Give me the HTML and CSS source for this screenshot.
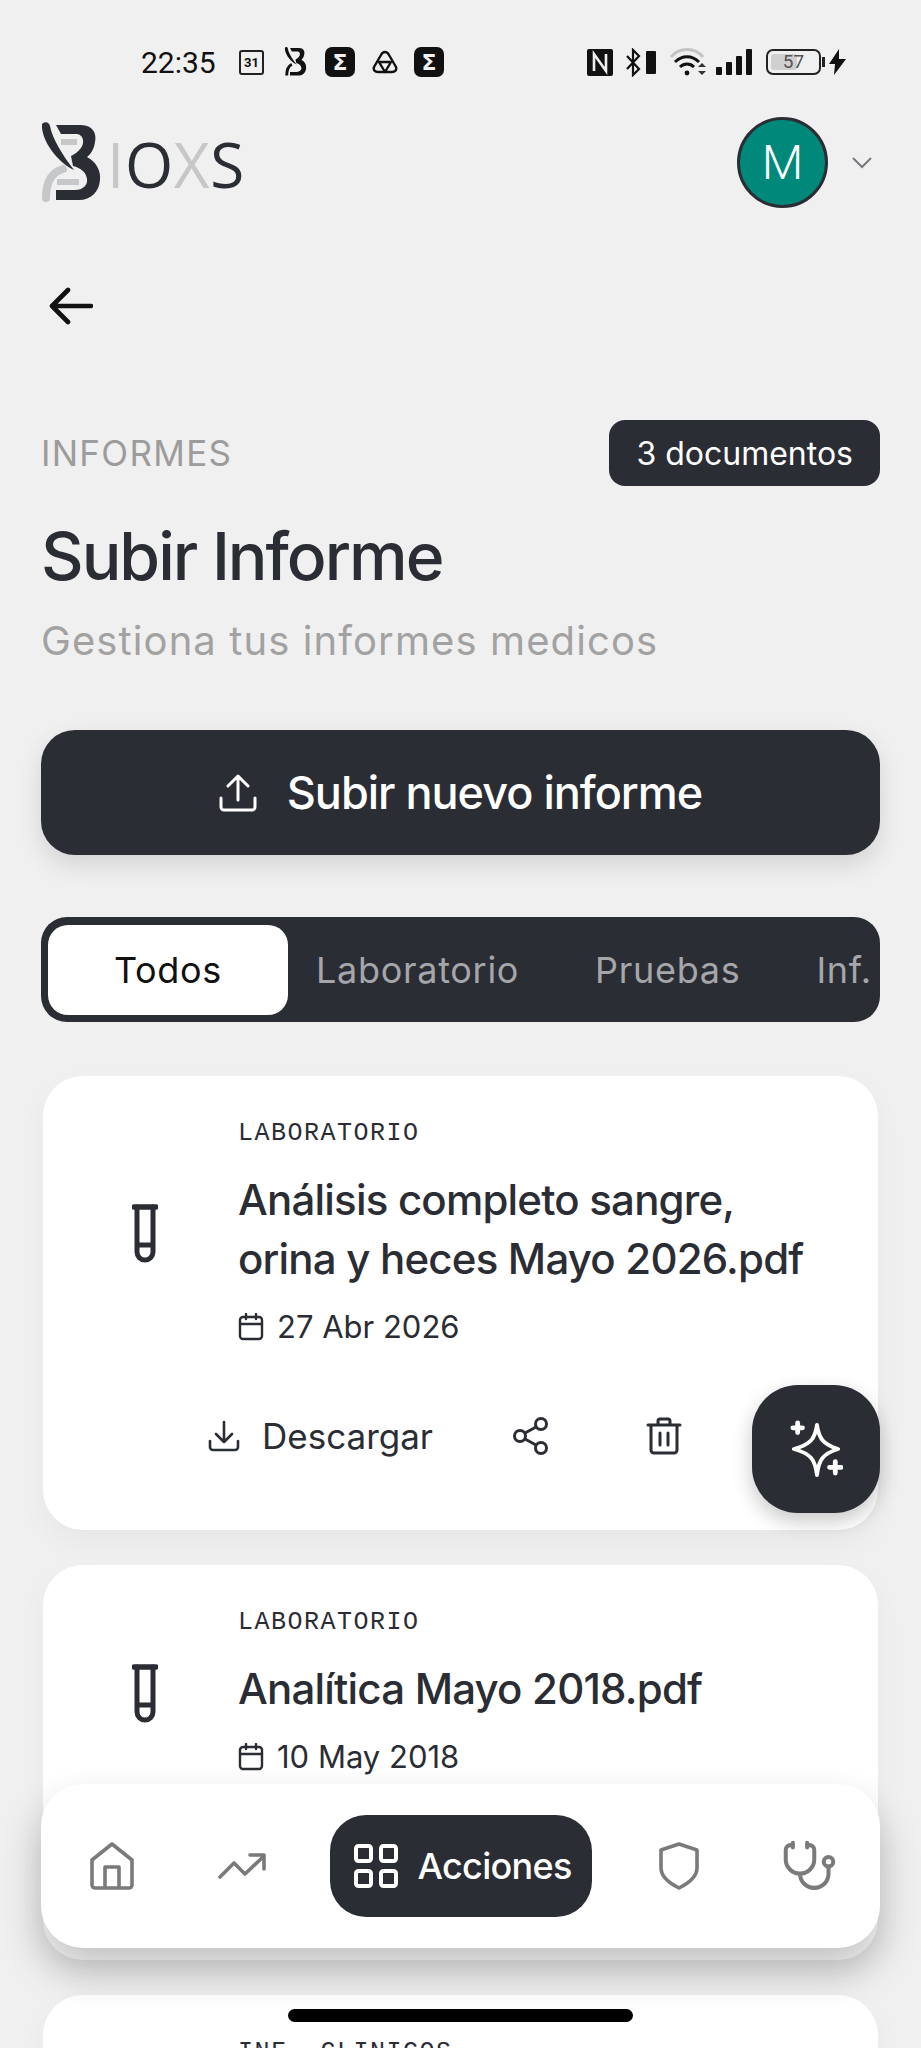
FILE: index.html
```html
<!DOCTYPE html>
<html lang="es">
<head>
    <meta charset="UTF-8">
    <meta name="viewport" content="width=device-width, initial-scale=1.0">
    <title>Subir Informe</title>
    <link rel="stylesheet" href="styles.css">
</head>
<body>
<div class="page">
    <!-- status bar -->
    <div class="status">
        <div class="status-left">
            <span class="time">22:35</span>
            <span class="cal-icon">31</span>
            <svg class="st-b" viewBox="0 0 60 82"><path d="M15 3H40C52 3 56 12 54 20C53 27 50 32 46 35C55 40 60 48 59 58C58 70 50 78 38 78H15V68H34C42 68 47 63 46 57C45 50 40 46 32 44L30 34C38 30 43 24 42 18C41 13 38 12 34 12H20Z"/><path d="M1 2C4 -1 8 0 9 4C11 16 22 34 33 48C20 42 3 24 1 6Z"/><path d="M20 47C10 52 6 62 6 78" fill="none" stroke="#111" stroke-width="8"/></svg>
            <span class="sigma">Σ</span>
            <svg class="st-tri" viewBox="0 0 26 24" fill="none" stroke="#111" stroke-width="2.4" stroke-linejoin="round"><path d="M13 2C15 2 16 3 17 5L24 17C25 20 23 22 20 22H6C3 22 1 20 2 17L9 5C10 3 11 2 13 2Z"/><path d="M7 12H19L13 22Z"/></svg>
            <span class="sigma">Σ</span>
        </div>
        <div class="status-right">
            <svg class="st-nfc" viewBox="0 0 26 27"><rect width="26" height="27" rx="2" fill="#111"/><path d="M7 22V5L19 22V5" fill="none" stroke="#f0f0f0" stroke-width="2.6"/></svg>
            <svg class="st-bt" viewBox="0 0 30 29" fill="none" stroke="#111" stroke-width="2.2"><path d="M1 8 13 21 7 27V2L13 8 1 21"/><rect x="20" y="3" width="10" height="23" rx="1" fill="#111" stroke="none"/></svg>
            <svg class="st-wifi" viewBox="0 0 37 29" fill="none" stroke="#111" stroke-width="3"><path d="M1 9C9 -1 25 -1 33 9" stroke="#c4c4c4"/><path d="M5 14C12 7 22 7 29 14"/><path d="M10 19C14 15 20 15 24 19"/><circle cx="17" cy="25" r="2.4" fill="#111" stroke="none"/><path d="M28 19l4 -4 4 4zM28 23h8l-4 4z" fill="#333" stroke="none"/></svg>
            <svg class="st-signal" viewBox="0 0 36 26"><rect x="0" y="18" width="6" height="8" rx="1"/><rect x="10" y="13" width="6" height="13" rx="1"/><rect x="20" y="7" width="6" height="19" rx="1"/><rect x="30" y="0" width="6" height="26" rx="1"/></svg>
            <div class="battery"><span class="battery-fill"></span><span class="battery-num">57</span></div>
            <svg class="st-bolt" viewBox="0 0 17 26"><path d="M10 0 0 15H6L5 26 17 10H10Z" fill="#111"/></svg>
        </div>
    </div>

    <div class="header">
        <div class="logo">
            <svg class="logo-mark" viewBox="0 0 60 82">
                <path d="M22 47C11 50 5 60 5 76" fill="none" stroke="#c6c7c9" stroke-width="8" stroke-linecap="round"/>
                <path d="M20 20H36M16 60H38" fill="none" stroke="#c6c7c9" stroke-width="6"/>
                <path d="M15 3H40C52 3 56 12 54 20C53 27 50 32 46 35C55 40 60 48 59 58C58 70 50 78 38 78H15V68H34C42 68 47 63 46 57C45 50 40 46 32 44L30 34C38 30 43 24 42 18C41 13 38 12 34 12H20Z" fill="#2b2d35"/>
                <path d="M1 2C4 -1 8 0 9 4C11 16 22 34 33 48C20 42 3 24 1 6Z" fill="#2b2d35"/>
            </svg>
            <span class="logo-word"><span class="logo-light">I</span>O<span class="logo-light">X</span>S</span>
        </div>
        <div class="user">
            <div class="avatar">M</div>
            <svg class="chevron" viewBox="0 0 20 12" fill="none" stroke="#77797f" stroke-width="2"><path d="M1 1 10 10 19 1"/></svg>
        </div>
    </div>

    <svg class="back" viewBox="0 0 44 38" fill="none" stroke="#111" stroke-width="4.6" stroke-linecap="round" stroke-linejoin="round"><path d="M42 19H3M19 3 3 19 19 35"/></svg>

    <div class="info-row">
        <span class="overline">INFORMES</span>
        <span class="badge">3 documentos</span>
    </div>
    <h1 class="title">Subir Informe</h1>
    <p class="subtitle">Gestiona tus informes medicos</p>

    <button class="upload-btn">
        <svg class="upload-icon" viewBox="0 0 38 38" fill="none" stroke="#fff" stroke-width="3" stroke-linecap="round" stroke-linejoin="round"><path d="M19 26V3M9 12 19 2 29 12M2 24V33A3 3 0 0 0 5 36H33A3 3 0 0 0 36 33V24"/></svg>
        Subir nuevo informe
    </button>

    <div class="tabs">
        <span class="tab active">Todos</span>
        <span class="tab">Laboratorio</span>
        <span class="tab">Pruebas</span>
        <span class="tab">Inf.</span>
    </div>

    <div class="card">
        <div class="card-main">
            <div class="card-icon">
                <svg class="tube" viewBox="0 0 26 60" fill="none" stroke="#2b2d35" stroke-width="5" stroke-linecap="round"><path d="M2 3H24" stroke-width="5.5"/><path d="M5 3V48A8 8 0 0 0 21 48V3M5 41H21"/></svg>
            </div>
            <div class="card-text">
                <div class="card-label">LABORATORIO</div>
                <div class="card-title">Análisis completo sangre, orina y heces Mayo 2026.pdf</div>
                <div class="card-date">
                    <svg class="date-icon" viewBox="0 0 26 28" fill="none" stroke="#2b2d35" stroke-width="2.4" stroke-linecap="round"><rect x="2" y="4" width="22" height="22" rx="3"/><path d="M2 11H24M8 1V6M18 1V6"/></svg>
                    27 Abr 2026
                </div>
            </div>
        </div>
        <div class="card-actions">
            <span class="download">
                <svg class="download-icon" viewBox="0 0 32 32" fill="none" stroke="#2b2d35" stroke-width="2.6" stroke-linecap="round" stroke-linejoin="round"><path d="M16 2V22M8 14 16 22 24 14M2 21V27A3 3 0 0 0 5 30H27A3 3 0 0 0 30 27V21"/></svg>
                Descargar
            </span>
            <svg class="share-icon" viewBox="0 0 36 38" fill="none" stroke="#2b2d35" stroke-width="3"><circle cx="28" cy="7" r="5.5"/><circle cx="7" cy="19" r="5.5"/><circle cx="28" cy="31" r="5.5"/><path d="M12 16 23 10M12 22 23 28"/></svg>
            <svg class="trash-icon" viewBox="0 0 36 38" fill="none" stroke="#2b2d35" stroke-width="3" stroke-linecap="round" stroke-linejoin="round"><path d="M2 8H34M12 8V4A2 2 0 0 1 14 2H22A2 2 0 0 1 24 4V8M5 8V33A3 3 0 0 0 8 36H28A3 3 0 0 0 31 33V8M14 16V28M22 16V28"/></svg>
        </div>
    </div>

    <div class="card">
        <div class="card-main">
            <div class="card-icon">
                <svg class="tube" viewBox="0 0 26 60" fill="none" stroke="#2b2d35" stroke-width="5" stroke-linecap="round"><path d="M2 3H24" stroke-width="5.5"/><path d="M5 3V48A8 8 0 0 0 21 48V3M5 41H21"/></svg>
            </div>
            <div class="card-text">
                <div class="card-label">LABORATORIO</div>
                <div class="card-title">Analítica Mayo 2018.pdf</div>
                <div class="card-date">
                    <svg class="date-icon" viewBox="0 0 26 28" fill="none" stroke="#2b2d35" stroke-width="2.4" stroke-linecap="round"><rect x="2" y="4" width="22" height="22" rx="3"/><path d="M2 11H24M8 1V6M18 1V6"/></svg>
                    10 May 2018
                </div>
            </div>
        </div>
        <div class="card-actions"></div>
    </div>

    <div class="card">
        <div class="card-main">
            <div class="card-icon"></div>
            <div class="card-text">
                <div class="card-label">INF. CLINICOS</div>
            </div>
        </div>
    </div>

    <!-- things floating over the list -->
    <button class="fab">
        <svg viewBox="0 0 56 62" fill="none" stroke="#fff" stroke-width="4" stroke-linecap="round" stroke-linejoin="round"><path d="M29 6C31 20 35 26 51 31C35 36 31 42 29 58C27 42 23 36 5 31C23 26 27 20 29 6Z"/><path d="M9 4V14M4 9H14M48 44V56M42 50H54" stroke-width="5"/></svg>
    </button>

    <div class="nav">
        <span class="nav-btn">
            <svg class="home-icon" viewBox="0 0 44 48" fill="none" stroke="#7a7a7a" stroke-width="3.6" stroke-linejoin="round"><path d="M22 2 42 18V43A3 3 0 0 1 39 46H5A3 3 0 0 1 2 43V18Z"/><path d="M15 46V25H29V46"/></svg>
        </span>
        <span class="nav-btn">
            <svg class="trend-icon" viewBox="0 0 48 26" fill="none" stroke="#7a7a7a" stroke-width="3.6" stroke-linecap="round" stroke-linejoin="round"><path d="M2 24 16 10 27 21 46 3M32 2H46V16"/></svg>
        </span>
        <span class="nav-pill">
            <svg class="grid-icon" viewBox="0 0 44 44" fill="none" stroke="#fff" stroke-width="4"><rect x="2" y="2" width="15" height="15" rx="2.5"/><rect x="27" y="2" width="15" height="15" rx="2.5"/><rect x="2" y="27" width="15" height="15" rx="2.5"/><rect x="27" y="27" width="15" height="15" rx="2.5"/></svg>
            Acciones
        </span>
        <span class="nav-btn">
            <svg class="shield-icon" viewBox="0 0 40 48" fill="none" stroke="#7a7a7a" stroke-width="3.6" stroke-linejoin="round"><path d="M20 2 38 8V26C38 34 30 41 20 46C10 41 2 34 2 26V8Z"/></svg>
        </span>
        <span class="nav-btn">
            <svg class="steth-icon" viewBox="0 0 24 24" fill="none" stroke="#7a7a7a" stroke-width="1.7" stroke-linecap="round" stroke-linejoin="round"><path d="M11 2v2M5 2v2M5 3H4a2 2 0 0 0-2 2v4a6 6 0 0 0 12 0V5a2 2 0 0 0-2-2h-1M8 15a6 6 0 0 0 12 0v-3"/><circle cx="20" cy="10" r="2"/></svg>
        </span>
    </div>

    <div class="home-bar"></div>
</div>
</body>
</html>
```

FILE: styles.css
```css
* {
    box-sizing: border-box;
}
body {
    margin: 0;
    background-color: #f0f0f0;
    font-family: Inter, "Noto Sans", sans-serif;
    color: #2b2d35;
}
.page {
    position: relative;
    width: 921px;
    height: 2048px;
    overflow: hidden;
    padding: 0 41px;
}

/* status bar */
.status {
    display: flex;
    justify-content: space-between;
    align-items: center;
    height: 30px;
    margin: 47px -41px 0;
    padding: 0 75px 0 141px;
    color: #111;
}
.status-left,
.status-right {
    display: flex;
    align-items: center;
}
.time {
    font-family: Roboto, sans-serif;
    font-size: 30px;
    width: 98px;
}
.cal-icon {
    display: flex;
    align-items: center;
    justify-content: center;
    width: 25px;
    height: 25px;
    border: 2px solid #222;
    border-radius: 3px;
    font-family: Roboto, sans-serif;
    font-size: 13px;
    font-weight: 700;
}
.st-b {
    width: 23px;
    height: 30px;
    margin-left: 20px;
    fill: #111;
}
.sigma {
    display: flex;
    align-items: center;
    justify-content: center;
    width: 30px;
    height: 30px;
    margin-left: 18px;
    border-radius: 7px;
    background-color: #111;
    color: #f0f0f0;
    font-family: "DejaVu Sans", sans-serif;
    font-size: 22px;
    font-weight: 700;
}
.st-tri {
    width: 26px;
    height: 24px;
    margin-left: 17px;
}
.st-tri + .sigma {
    margin-left: 16px;
}
.st-nfc {
    width: 26px;
    height: 27px;
}
.st-bt {
    width: 30px;
    height: 29px;
    margin-left: 13px;
}
.st-wifi {
    width: 37px;
    height: 29px;
    margin-left: 14px;
}
.st-signal {
    width: 36px;
    height: 26px;
    margin-left: 9px;
    fill: #111;
}
.battery {
    position: relative;
    width: 55px;
    height: 26px;
    margin-left: 14px;
    border: 2px solid #222;
    border-radius: 7px;
    padding: 3px;
}
.battery::after {
    content: "";
    position: absolute;
    right: -6px;
    top: 6px;
    width: 3px;
    height: 10px;
    background-color: #222;
}
.battery-fill {
    display: block;
    width: 57%;
    height: 100%;
    border-radius: 3px;
    background-color: #d0d0d0;
}
.battery-num {
    position: absolute;
    left: 0;
    right: 0;
    top: 0;
    text-align: center;
    font-family: Roboto, sans-serif;
    font-size: 19px;
    line-height: 22px;
    color: #555;
}
.st-bolt {
    width: 17px;
    height: 26px;
    margin-left: 8px;
}

/* header */
.header {
    display: flex;
    justify-content: space-between;
    align-items: center;
    padding-top: 40px;
}
.logo {
    display: flex;
    align-items: flex-end;
    gap: 6px;
}
.logo-mark {
    width: 60px;
    height: 82px;
    display: block;
}
.logo-word {
    font-family: "Open Sans", sans-serif;
    font-weight: 400;
    font-size: 62px;
    line-height: 62px;
    letter-spacing: 0.6px;
    margin-bottom: 9px;
    color: #2b2d35;
}
.logo-light {
    color: #c6c7c9;
}
.user {
    display: flex;
    align-items: center;
    gap: 24px;
    padding-right: 8px;
}
.avatar {
    display: flex;
    align-items: center;
    justify-content: center;
    width: 91px;
    height: 91px;
    border-radius: 50%;
    border: 3px solid #2b2d35;
    background-color: #00897b;
    color: #fff;
    font-family: Roboto, sans-serif;
    font-weight: 300;
    font-size: 48px;
}
.chevron {
    width: 20px;
    height: 12px;
}
.back {
    display: block;
    width: 44px;
    height: 38px;
    margin: 79px 0 0 8px;
}

/* headings */
.info-row {
    display: flex;
    justify-content: space-between;
    align-items: center;
    margin-top: 95px;
}
.overline {
    font-size: 35px;
    color: #9c9c9c;
    letter-spacing: 1.3px;
}
.badge {
    display: flex;
    align-items: center;
    height: 66px;
    padding: 0 27px;
    border-radius: 16px;
    background-color: #2b2d35;
    color: #fff;
    font-size: 32px;
}
.title {
    margin: 30px 0 0;
    font-size: 66px;
    line-height: 80px;
    font-weight: 500;
    letter-spacing: -2px;
}
.subtitle {
    margin: 20px 0 0;
    font-size: 40px;
    line-height: 50px;
    color: #a2a2a2;
    letter-spacing: 1.1px;
}
.upload-btn {
    display: flex;
    align-items: center;
    justify-content: center;
    gap: 30px;
    width: 100%;
    height: 125px;
    margin-top: 64px;
    border: none;
    border-radius: 34px;
    background-color: #2b2d35;
    color: #fff;
    font-family: inherit;
    font-size: 45px;
    font-weight: 500;
    letter-spacing: -1px;
    box-shadow: 0 10px 24px rgba(0, 0, 0, 0.12);
}
.upload-icon {
    width: 38px;
    height: 38px;
}

/* tabs */
.tabs {
    display: flex;
    align-items: center;
    height: 105px;
    margin-top: 62px;
    padding: 0 7px;
    border-radius: 26px;
    background-color: #2b2d35;
    overflow: hidden;
    white-space: nowrap;
}
.tab {
    flex-shrink: 0;
    padding: 0 38px;
    font-size: 36px;
    letter-spacing: 0.7px;
    color: #a5a6aa;
}
.tab.active {
    display: flex;
    align-items: center;
    justify-content: center;
    width: 240px;
    height: 90px;
    margin-right: -10px;
    border-radius: 20px;
    background-color: #fff;
    color: #111;
}

/* cards */
.card {
    margin: 0 2px 35px;
    padding-bottom: 58px;
    border-radius: 40px;
    background-color: #fff;
    box-shadow: 0 12px 30px rgba(0, 0, 0, 0.04);
}
.tabs + .card {
    margin-top: 54px;
}
.card-main {
    display: flex;
    align-items: center;
    padding-top: 43px;
}
.card-icon {
    display: flex;
    justify-content: center;
    width: 195px;
    padding-left: 9px;
    flex-shrink: 0;
}
.tube {
    width: 26px;
    height: 60px;
}
.card-text {
    flex: 1;
    padding-right: 55px;
}
.card-label {
    font-family: "Liberation Mono", monospace;
    font-size: 25px;
    line-height: 30px;
    letter-spacing: 1.5px;
    color: #2b2d35;
}
.card-title {
    margin-top: 21px;
    font-size: 42px;
    line-height: 59px;
    font-weight: 500;
    letter-spacing: -0.8px;
}
.card-date {
    display: flex;
    align-items: center;
    gap: 13px;
    margin-top: 17px;
    font-size: 31px;
    line-height: 44px;
}
.date-icon {
    width: 26px;
    height: 28px;
}
.card-actions {
    display: flex;
    align-items: center;
    height: 72px;
    margin-top: 51px;
    padding-left: 165px;
}
.download {
    display: flex;
    align-items: center;
    gap: 22px;
    font-size: 35px;
}
.download-icon {
    width: 32px;
    height: 32px;
}
.share-icon {
    width: 36px;
    height: 38px;
    margin-left: 80px;
}
.trash-icon {
    width: 36px;
    height: 38px;
    margin-left: 97px;
}

/* floating */
.fab {
    position: absolute;
    left: 752px;
    top: 1385px;
    display: flex;
    align-items: center;
    justify-content: center;
    width: 128px;
    height: 128px;
    border: none;
    border-radius: 46px;
    background-color: #2b2d35;
    box-shadow: 0 8px 20px rgba(0, 0, 0, 0.22);
}
.fab svg {
    width: 54px;
    height: 60px;
}
.nav {
    position: absolute;
    left: 41px;
    top: 1784px;
    display: flex;
    align-items: center;
    justify-content: space-between;
    width: 839px;
    height: 164px;
    padding: 0 28px;
    border-radius: 42px;
    background-color: #fff;
    box-shadow: 0 22px 40px rgba(0, 0, 0, 0.24);
}
.nav-btn {
    display: flex;
    align-items: center;
    justify-content: center;
    width: 86px;
    height: 102px;
}
.nav-pill {
    display: flex;
    align-items: center;
    gap: 20px;
    width: 262px;
    height: 102px;
    padding-left: 24px;
    border-radius: 36px;
    background-color: #2b2d35;
    color: #fff;
    font-size: 36px;
    font-weight: 500;
    letter-spacing: -0.7px;
}
.home-icon {
    width: 44px;
    height: 48px;
}
.trend-icon {
    width: 48px;
    height: 26px;
}
.grid-icon {
    width: 44px;
    height: 44px;
}
.shield-icon {
    width: 40px;
    height: 48px;
}
.steth-icon {
    width: 57px;
    height: 57px;
    flex-shrink: 0;
}
.home-bar {
    position: absolute;
    left: 288px;
    top: 2009px;
    width: 345px;
    height: 13px;
    border-radius: 7px;
    background-color: #000;
}
```
